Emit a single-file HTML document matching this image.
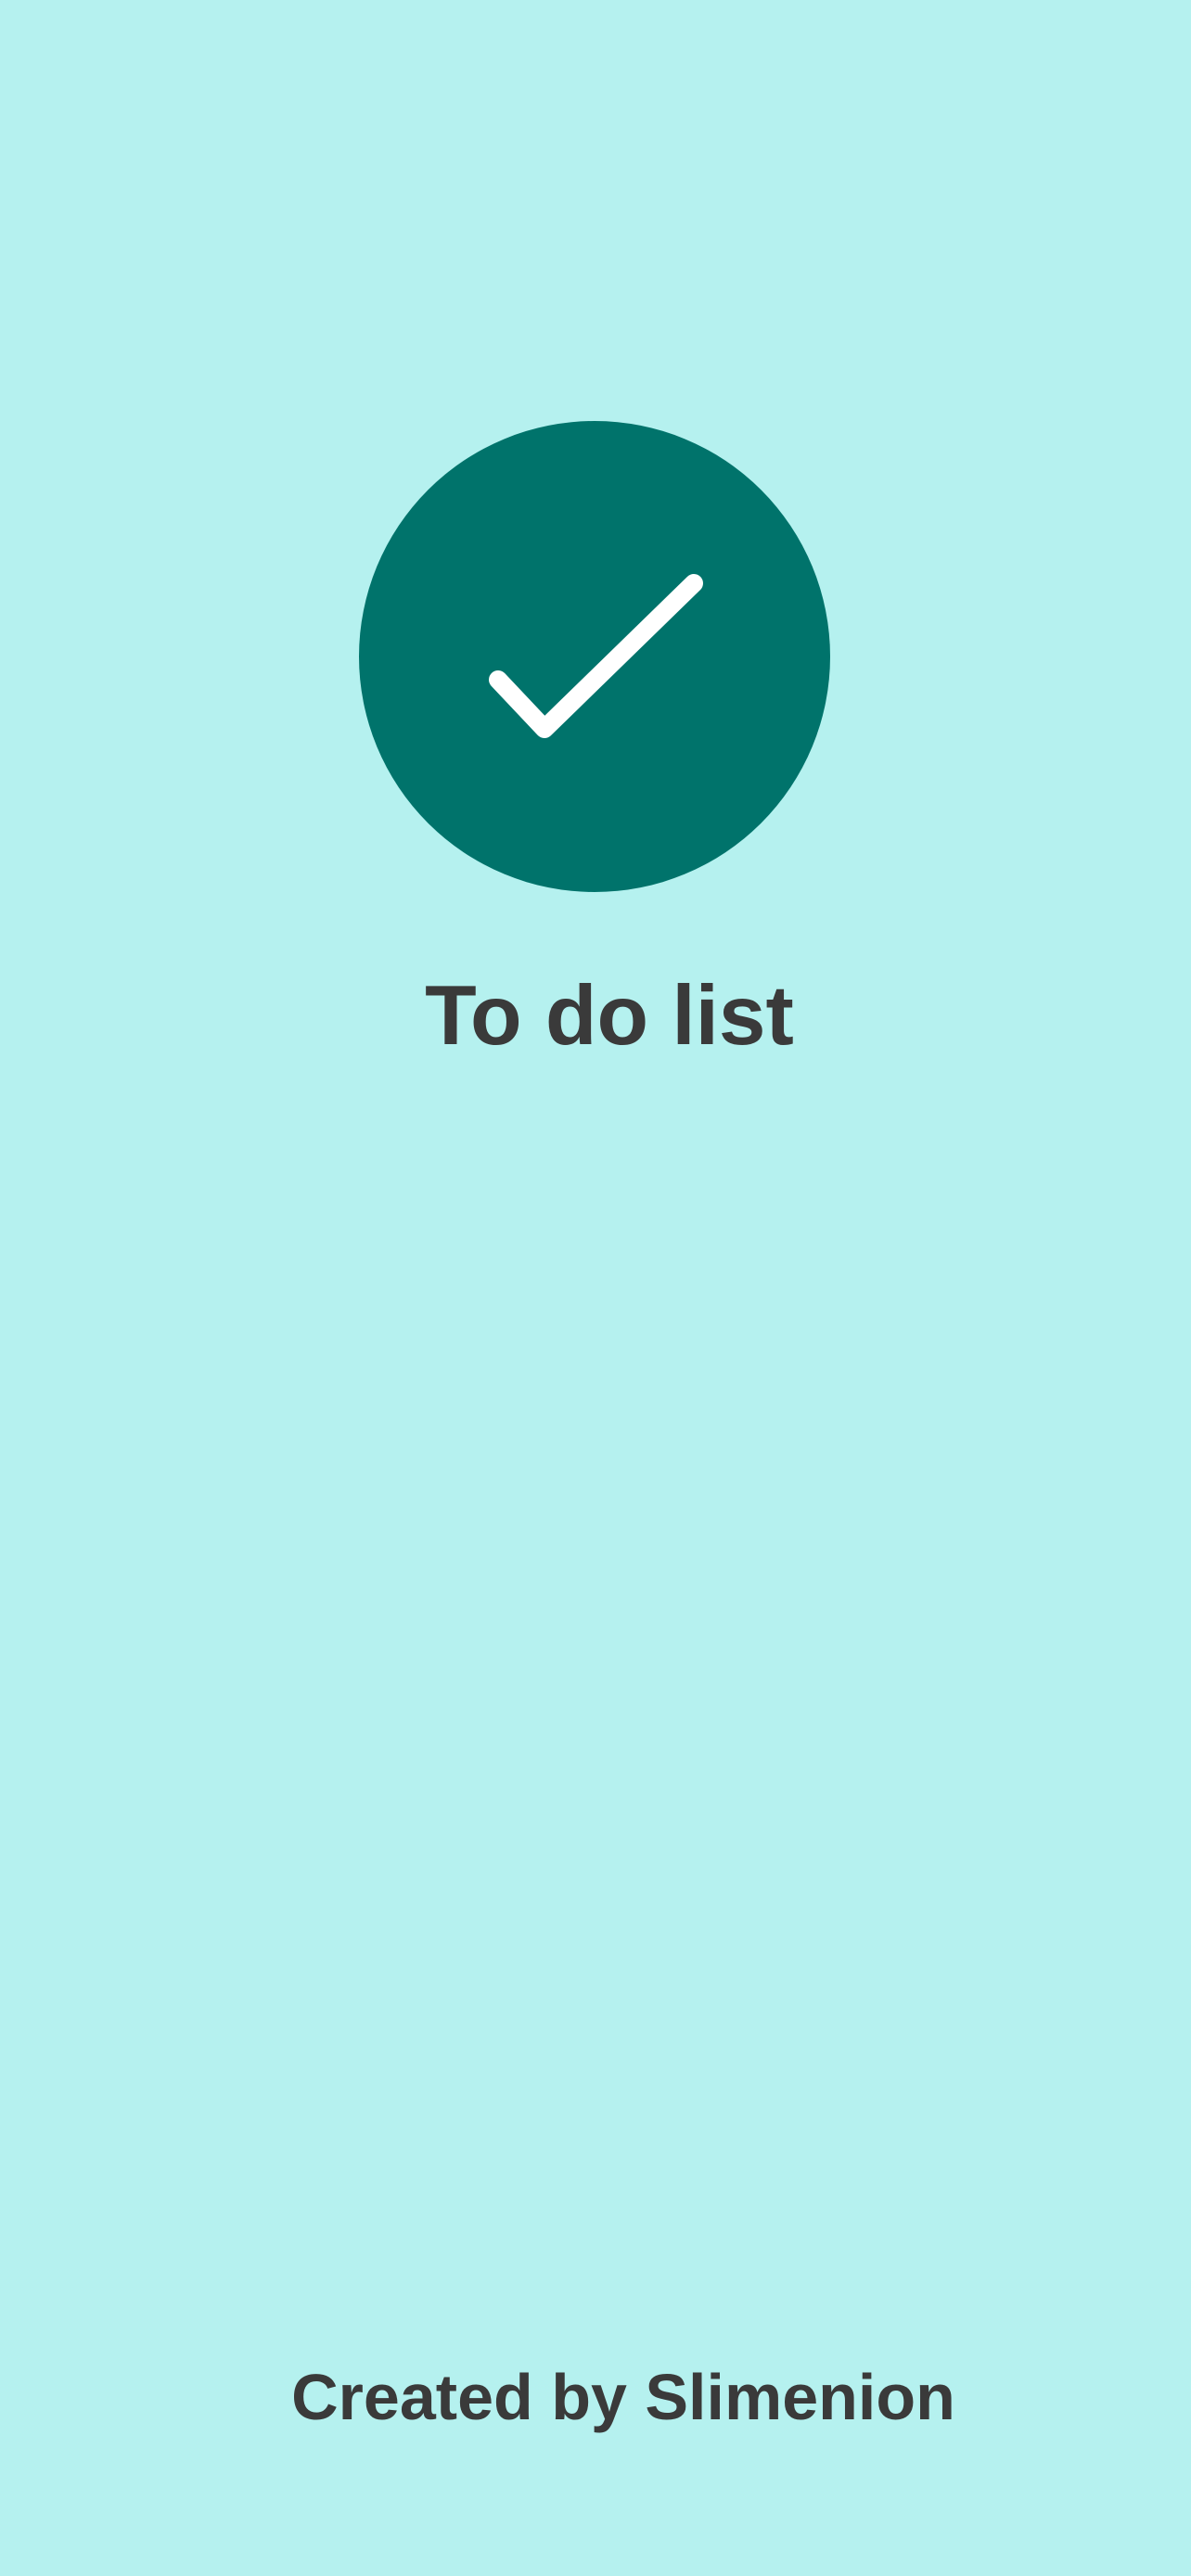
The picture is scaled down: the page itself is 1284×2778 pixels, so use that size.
<!DOCTYPE html>
<html><head><meta charset="utf-8"><style>
html,body{margin:0;padding:0}
body{width:1284px;height:2778px;background:#b5f1ef;position:relative;overflow:hidden;font-family:"Liberation Sans",sans-serif;color:#3a3a3a}
.t{position:absolute;left:0;width:1284px;text-align:center;font-weight:bold;white-space:nowrap}
</style></head><body>
<svg width="1284" height="1000" style="position:absolute;left:0;top:0">
<circle cx="641" cy="708" r="254" fill="#00736b"/>
<polyline points="537,733 587,786 748,629" fill="none" stroke="#fff" stroke-width="20" stroke-linecap="round" stroke-linejoin="round"/>
</svg>
<div class="t" style="top:1044px;font-size:91px;left:15px;">To do list</div>
<div class="t" style="top:2545px;font-size:70px;left:30px;">Created by Slimenion</div>
</body></html>
